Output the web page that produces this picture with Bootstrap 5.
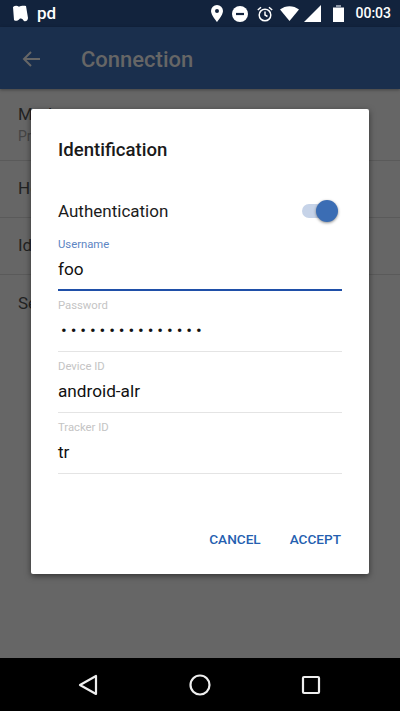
<!DOCTYPE html>
<html lang="en">

<head>
    <meta charset="UTF-8">
    <meta name="viewport" content="width=device-width, initial-scale=1.0">
    <title>Connection</title>
    <link href="https://cdn.jsdelivr.net/npm/bootstrap@5.3.0/dist/css/bootstrap.min.css" rel="stylesheet">
    <style>
        html, body { height: 100%; }
        body {
            background: #666;
            font-family: Roboto, "Liberation Sans", sans-serif;
            overflow: hidden;
        }
        .phone { width: 400px; height: 711px; }
        .status-bar { height: 27px; background: #12233d; color: #fff; font-size: 14px; font-weight: 500; padding: 0 9px 0 12px; }
        .pd-text { font-size: 17px; margin-left: 8px; line-height: 1; }
        .st-icons svg { display: block; }
        .st-pin { margin-right: 9px; }
        .st-dnd { margin-right: 9px; }
        .st-alarm { margin-right: 7px; }
        .st-wifi { margin-right: 5px; }
        .st-signal { margin-right: 12px; }
        .st-batt { margin-right: 11px; }
        .app-bar { height: 62px; background: #1a2f4d; color: #666; box-shadow: 0 1px 3px rgba(0,0,0,.35); padding: 2px 0 0 20px; }
        .app-title { font-size: 22px; font-weight: 500; margin-left: 37px; }
        .bg-list { flex: 1; color: #222; font-size: 17px; }
        .bg-row { border-bottom: 1px solid #5a5a5a; padding-left: 18px; }
        .row-first { height: 72px; padding-top: 15px; line-height: 21px; }
        .row-first span { font-size: 14px; color: #444; }
        .row-plain { height: 57px; }
        .row-last { border: 0; }
        .bottom-nav { height: 53px; background: #000; gap: 87px; }
        .bottom-nav svg { display: block; }
        .dialog-box {
            position: absolute; left: 31px; top: 109px; width: 338px; height: 465px;
            background: #fff; border-radius: 2px; padding: 28px 27px 0;
            box-shadow: 0 2px 6px rgba(0,0,0,.5);
        }
        .dialog-title { font-size: 18.6px; font-weight: 500; color: #1a1a1a; line-height: 26px; margin: 0; }
        .auth-row { margin: 34px 0 9px; height: 30px; font-size: 17px; color: #1c1c1c; padding-right: 7px; }
        .toggle-track { width: 33px; height: 14px; border-radius: 7px; background: #c6d3e8; position: relative; top: -1px; }
        .toggle-knob {
            position: absolute; right: -3px; top: -4px; width: 22px; height: 22px; border-radius: 50%;
            background: #3b6db4; box-shadow: 0 1px 3px rgba(0,0,0,.45);
        }
        .field-box { height: 61px; }
        .field-label { font-size: 11.3px; line-height: 14px; color: #c4c4c4; padding-top: 2px; box-sizing: content-box; height: 14px; }
        .field-label.on { color: #5d85c3; }
        .field-value { font-size: 17.2px; line-height: 24px; color: #111; margin-top: 5px; height: 24px; }
        .field-line { border-bottom: 1px solid #e4e4e4; margin-top: 9px; }
        .field-line.on { border-bottom: 2px solid #1f4fa8; margin-top: 8px; }
        .pw-dots { letter-spacing: 3.9px; font-size: 17px; padding-left: 3px; }
        .dialog-actions { margin-top: 49px; gap: 29px; padding-right: 1px; color: #255fb0; font-size: 13.6px; font-weight: 500; }
    </style>
</head>

<body>
    <div class="phone d-flex flex-column">
        <div class="status-bar d-flex align-items-center">
            <svg width="17" height="17" viewBox="0 0 17 17"><path d="M1 2c2-1.500 4-1.500 6-.3C9 .5 12 .5 14 1l2 12c0 2.500-2.500 4-4 3-1-1.500-2-3-4-2.500-2 2.500-4.500 3-6 1.500z" fill="#fff"/></svg>
            <span class="pd-text">pd</span>
            <div class="st-icons ms-auto d-flex align-items-center">
                <svg class="st-pin" width="12" height="17" viewBox="0 0 12 17"><path d="M6 0a6 6 0 0 0-6 6c0 4 6 11 6 11s6-7 6-11a6 6 0 0 0-6-6zm0 8a2 2 0 1 1 0-4 2 2 0 0 1 0 4z" fill="#fff"/></svg>
                <svg class="st-dnd" width="16" height="16" viewBox="0 0 16 16"><circle cx="8" cy="8" r="8" fill="#fff"/><rect x="4" y="6.900" width="8" height="2.200" fill="#12233d"/></svg>
                <svg class="st-alarm" width="16" height="16" viewBox="0 0 16 16" fill="none" stroke="#fff" stroke-width="1.500"><circle cx="8" cy="9" r="5.800"/><path d="M8 5.500V9l2.500 1.500M.8 4 4 1.200M15.200 4 12 1.200"/></svg>
                <svg class="st-wifi" width="19" height="15" viewBox="0 0 19 15"><path d="M9.500 15 0 3.500C5.500-1 13.500-1 19 3.500z" fill="#fff"/></svg>
                <svg class="st-signal" width="17" height="17" viewBox="0 0 17 17"><path d="M0 17 17 0v17z" fill="#fff"/></svg>
                <svg class="st-batt" width="11" height="17" viewBox="0 0 11 17"><rect y="2.500" width="11" height="14.500" fill="#fff"/><rect x="3" width="5" height="2.500" fill="#8b95a5"/></svg>
                <span>00:03</span>
            </div>
        </div>
        <div class="app-bar d-flex align-items-center">
            <svg width="24" height="24" viewBox="0 0 24 24" fill="none" stroke="#666" stroke-width="2"><path d="M20 12H4M11 5l-7 7 7 7"/></svg>
            <span class="app-title">Connection</span>
        </div>
        <div class="bg-list">
            <div class="bg-row row-first">Mode<br><span>Private</span></div>
            <div class="bg-row row-plain d-flex align-items-center">Host</div>
            <div class="bg-row row-plain d-flex align-items-center">Identification</div>
            <div class="bg-row row-plain row-last d-flex align-items-center">Security</div>
        </div>
        <div class="bottom-nav d-flex align-items-center justify-content-center">
            <svg width="24" height="24" viewBox="0 0 24 24" fill="none" stroke="#eee" stroke-width="2.200" stroke-linejoin="round"><path d="M19 3v18L3 12z"/></svg>
            <svg width="24" height="24" viewBox="0 0 24 24" fill="none" stroke="#eee" stroke-width="2.200"><circle cx="12" cy="12" r="9.500"/></svg>
            <svg width="24" height="24" viewBox="0 0 24 24" fill="none" stroke="#eee" stroke-width="2.200"><rect x="4" y="4" width="16" height="16" rx="1"/></svg>
        </div>
    </div>

    <div class="dialog-box">
        <h5 class="dialog-title">Identification</h5>
        <div class="auth-row d-flex align-items-center justify-content-between">
            <span>Authentication</span>
            <div class="toggle-track"><div class="toggle-knob"></div></div>
        </div>
        <div class="field-box">
            <div class="field-label on">Username</div>
            <div class="field-value">foo</div>
            <div class="field-line on"></div>
        </div>
        <div class="field-box">
            <div class="field-label">Password</div>
            <div class="field-value pw-dots">•••••••••••••••</div>
            <div class="field-line"></div>
        </div>
        <div class="field-box">
            <div class="field-label">Device ID</div>
            <div class="field-value">android-alr</div>
            <div class="field-line"></div>
        </div>
        <div class="field-box">
            <div class="field-label">Tracker ID</div>
            <div class="field-value">tr</div>
            <div class="field-line"></div>
        </div>
        <div class="dialog-actions d-flex justify-content-end">
            <span>CANCEL</span>
            <span>ACCEPT</span>
        </div>
    </div>
</body>

</html>
